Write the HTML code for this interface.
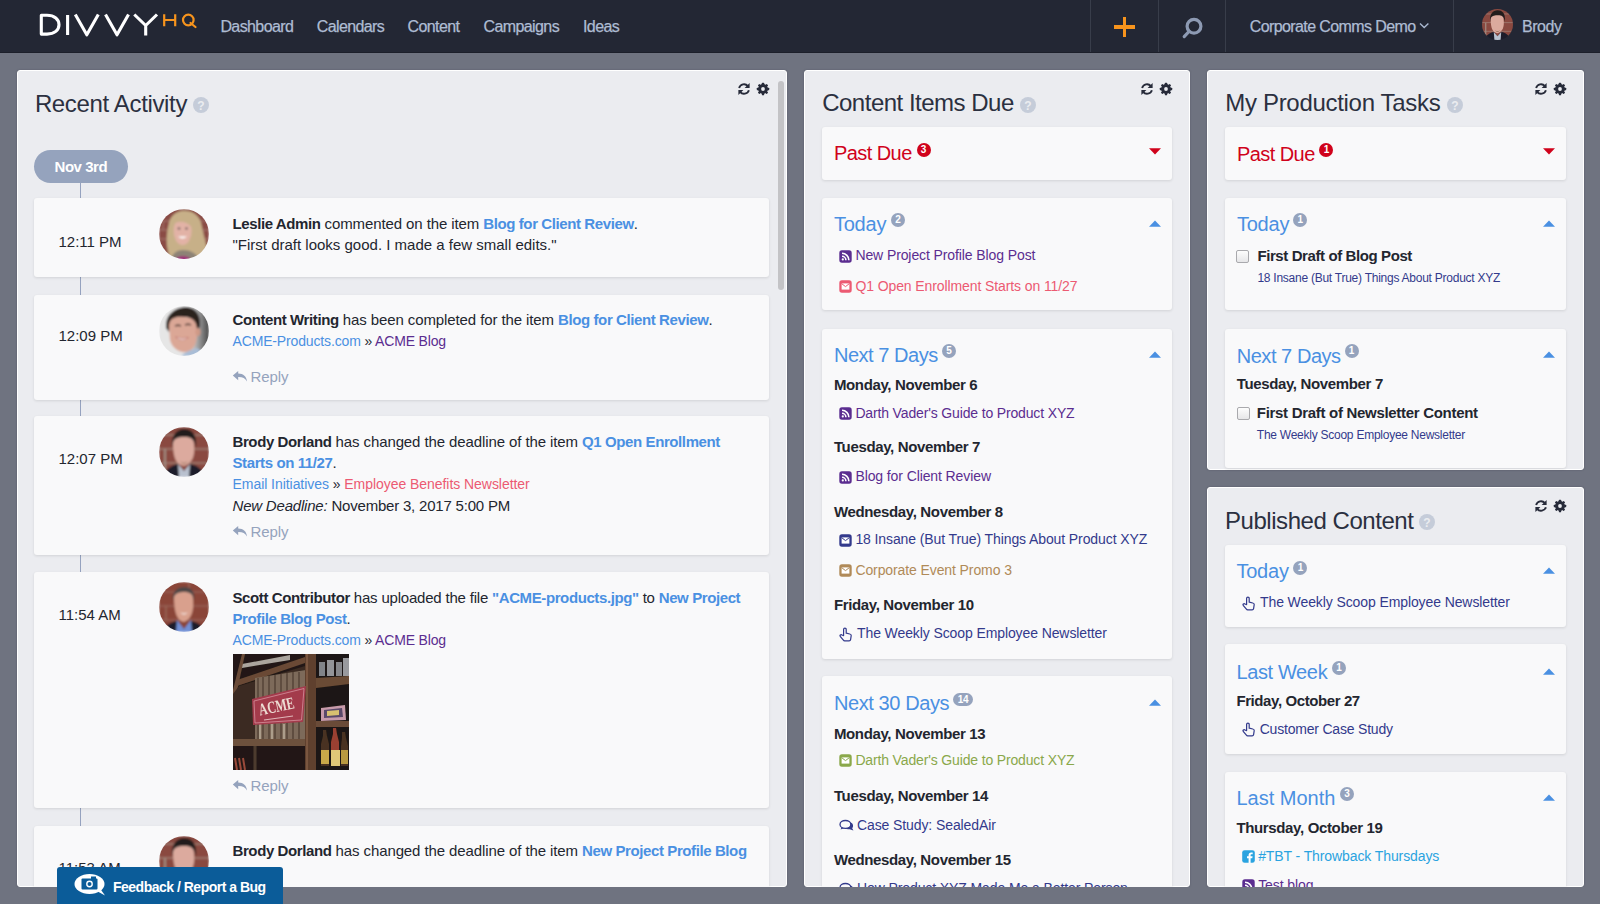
<!DOCTYPE html>
<html><head><meta charset="utf-8"><title>DivvyHQ Dashboard</title>
<style>
html,body{margin:0;padding:0}
body{width:1600px;height:904px;overflow:hidden;position:relative;background:#6f7380;font-family:"Liberation Sans",sans-serif;}
.t{position:absolute;white-space:nowrap}
.panel{position:absolute;background:#ebecf0;border:1px solid #fff;border-radius:3px;box-sizing:border-box;overflow:hidden;box-shadow:0 0 2px rgba(40,44,56,.35)}
.card{position:absolute;background:#f9f9fa;border-radius:3px;box-shadow:0 1px 3px rgba(0,0,0,.11)}
b{font-weight:700;letter-spacing:-0.4px}
.bl{color:#4a90e2;font-weight:700;letter-spacing:-0.4px}
</style></head><body>

<div style="position:absolute;left:0px;top:0px;width:1600px;height:52px;background:#232734;border-bottom:1px solid #1c1f2a"></div>
<svg style="position:absolute;left:36px;top:8px" width="166" height="34" viewBox="0 0 166 34">
<g fill="none" stroke="#fff" stroke-width="3.1" stroke-linejoin="round">
<path d="M5.3,7.3 V26.1 H11 C18.5,26.1 23,22 23,16.7 C23,11.4 18.5,7.3 11,7.3 Z"/>
<path d="M31.6,7 V27"/>
<path d="M39.3,6.5 L50.8,26.8 L62.3,6.5"/>
<path d="M69.5,6.5 L81,26.8 L92.5,6.5"/>
<path d="M98.3,6.5 L109.7,17.5 L121,6.5 M109.7,17.5 V27.5"/>
</g>
<g fill="none" stroke="#f7941d" stroke-width="2.2">
<path d="M128.2,6.2 V18.2 M139.2,6.2 V18.2 M128.2,12 H139.2"/>
<circle cx="152.3" cy="12" r="5.3"/>
<path d="M154.5,15 L159.5,19" stroke-linecap="round"/>
</g></svg>
<div class="t" style="left:220.4px;top:17.26px;font-size:16px;line-height:19px;color:#aebcd3;letter-spacing:-0.6px;-webkit-text-stroke:0.25px #aebcd3;">Dashboard</div>
<div class="t" style="left:316.7px;top:17.26px;font-size:16px;line-height:19px;color:#aebcd3;letter-spacing:-0.6px;-webkit-text-stroke:0.25px #aebcd3;">Calendars</div>
<div class="t" style="left:407.5px;top:17.26px;font-size:16px;line-height:19px;color:#aebcd3;letter-spacing:-0.6px;-webkit-text-stroke:0.25px #aebcd3;">Content</div>
<div class="t" style="left:483.5px;top:17.26px;font-size:16px;line-height:19px;color:#aebcd3;letter-spacing:-0.6px;-webkit-text-stroke:0.25px #aebcd3;">Campaigns</div>
<div class="t" style="left:583.0px;top:17.26px;font-size:16px;line-height:19px;color:#aebcd3;letter-spacing:-0.6px;-webkit-text-stroke:0.25px #aebcd3;">Ideas</div>
<div style="position:absolute;left:1090px;top:0px;width:1px;height:52px;background:#383d4a"></div>
<div style="position:absolute;left:1158px;top:0px;width:1px;height:52px;background:#383d4a"></div>
<div style="position:absolute;left:1225px;top:0px;width:1px;height:52px;background:#383d4a"></div>
<div style="position:absolute;left:1453px;top:0px;width:1px;height:52px;background:#383d4a"></div>
<div style="position:absolute;left:1114px;top:25.2px;width:21px;height:3.6px;background:#f7941d"></div>
<div style="position:absolute;left:1122.7px;top:17px;width:3.6px;height:20px;background:#f7941d"></div>
<svg style="position:absolute;left:1180px;top:14px" width="26" height="26" viewBox="0 0 26 26"><g fill="none" stroke="#8d9ab3" stroke-width="3.2" stroke-linecap="round"><circle cx="14" cy="12.3" r="6.9"/><path d="M9,17.5 L4.2,22.6"/></g></svg>
<div class="t" style="left:1249.7px;top:17.26px;font-size:16px;line-height:19px;color:#aebcd3;letter-spacing:-0.6px;-webkit-text-stroke:0.25px #aebcd3;">Corporate Comms Demo</div>
<svg style="position:absolute;left:1419px;top:22px" width="11" height="8" viewBox="0 0 11 8"><path d="M1,1.5 L5.2,5.5 L9.4,1.5" fill="none" stroke="#a9b8d0" stroke-width="1.4"/></svg>
<div class="t" style="left:1521.9px;top:17.26px;font-size:16px;line-height:19px;color:#aebcd3;letter-spacing:-0.4px;-webkit-text-stroke:0.25px #aebcd3;">Brody</div>
<div class="panel" style="left:17px;top:70px;width:770px;height:817px"></div>
<div class="panel" style="left:804px;top:70px;width:386px;height:817px"></div>
<div class="panel" style="left:1207px;top:70px;width:377px;height:400px"></div>
<div class="panel" style="left:1207px;top:487px;width:377px;height:400px"></div>
<div class="t" style="left:34.9px;top:89.38px;font-size:24px;line-height:29px;color:#2b3040;letter-spacing:-0.35px;">Recent Activity</div>
<svg style="position:absolute;left:193px;top:97px" width="16" height="16" viewBox="0 0 16 16"><circle cx="8.0" cy="8.0" r="8.0" fill="#c5ccd9"/><text x="8.0" y="12.6" text-anchor="middle" font-family="Liberation Sans" font-weight="700" font-size="12" fill="#ebecf0">?</text></svg>
<svg style="position:absolute;left:737px;top:82px" width="14" height="14" viewBox="0 0 14 14"><g fill="none" stroke="#272b3a" stroke-width="1.9">
<path d="M2.1,5.9 A5.1,5.1 0 0 1 10.9,4.1"/>
<path d="M11.9,8.2 A5.1,5.1 0 0 1 3.1,9.9"/></g>
<path d="M12.6,0.9 V5.9 H7.6 Z" fill="#272b3a"/>
<path d="M1.4,13.1 V8.1 H6.4 Z" fill="#272b3a"/></svg>
<svg style="position:absolute;left:756px;top:82px" width="14" height="14" viewBox="0 0 14 14"><g fill="#272b3a"><circle cx="7" cy="7" r="4.9"/><rect x="5.85" y="0.8" width="2.3" height="12.4" rx="0.5" transform="rotate(0 7 7)"/><rect x="5.85" y="0.8" width="2.3" height="12.4" rx="0.5" transform="rotate(45 7 7)"/><rect x="5.85" y="0.8" width="2.3" height="12.4" rx="0.5" transform="rotate(90 7 7)"/><rect x="5.85" y="0.8" width="2.3" height="12.4" rx="0.5" transform="rotate(135 7 7)"/></g><circle cx="7" cy="7" r="1.9" fill="#ebecf0"/></svg>
<div style="position:absolute;left:778px;top:81px;width:6px;height:209px;background:#c3c3c6;border-radius:3px"></div>
<div style="position:absolute;left:34px;top:150px;width:94px;height:33px;background:#95a3bd;border-radius:17px"></div>
<div class="t" style="left:54.5px;top:157.80px;font-size:15px;line-height:18px;color:#fff;font-weight:700;letter-spacing:-0.45px;">Nov 3rd</div>
<div style="position:absolute;left:80.2px;top:183px;width:1.3px;height:704px;background:#95a2bf"></div>
<div class="card" style="left:34px;top:198px;width:735px;height:79px"></div>
<div class="card" style="left:34px;top:295px;width:735px;height:105px"></div>
<div class="card" style="left:34px;top:416px;width:735px;height:139px"></div>
<div class="card" style="left:34px;top:572px;width:735px;height:236px"></div>
<div class="card" style="left:34px;top:826px;width:735px;height:90px"></div>
<div class="t" style="left:58.5px;top:232.90px;font-size:15px;line-height:18px;color:#23262f;">12:11 PM</div>
<svg style="position:absolute;left:158.5px;top:209px" width="50" height="50" viewBox="0 0 50 50"><defs><filter id="blleslie209" x="-10%" y="-10%" width="120%" height="120%"><feGaussianBlur stdDeviation="0.85"/></filter><clipPath id="cpleslie209"><circle cx="25" cy="25" r="25"/></clipPath></defs><defs><linearGradient id="gr" x1="0" x2="1"><stop offset="0" stop-color="#e6e6e6"/><stop offset="1" stop-color="#4a4a4a"/></linearGradient></defs><g clip-path="url(#cpleslie209)"><g filter="url(#blleslie209)"><rect width="50" height="50" fill="#8a4c44"/>
<path d="M0,12 H50 M0,21 H50 M0,30 H50" stroke="#a77d74" stroke-width="1"/>
<path d="M4,12 V21 M44,21 V30" stroke="#a77d74" stroke-width="1"/>
<path d="M10,46 C6,34 8,22 10,14 C12,5 20,1 27,2 C36,2 42,9 43,18 C44,26 48,34 48,44 L40,52 H12 Z" fill="#c7b088"/>
<path d="M12,50 C14,44 18,41 24,41 C31,41 37,44 40,50 Z" fill="#8d8376"/>
<ellipse cx="23.6" cy="22" rx="9" ry="14" fill="#e2b2a6"/>
<path d="M16,12 C20,7 30,6 34,12 C36,16 36,20 35,24 C33,16 26,10 16,14 Z" fill="#c7b088"/>
<ellipse cx="20" cy="19.5" rx="1.4" ry="0.9" fill="#5a4a50"/><ellipse cx="27.5" cy="19.5" rx="1.4" ry="0.9" fill="#5a4a50"/>
<path d="M19,27.5 Q23.5,31.5 28,27.5 Z" fill="#fff"/>
<path d="M17,49 Q24,45 31,49 L31,52 H17 Z" fill="#9e2f78"/></g></g></svg>
<div class="t" style="left:232.5px;top:214.60px;font-size:15px;line-height:18px;color:#23262f;letter-spacing:-0.1px;"><b style="color:#23262f">Leslie Admin</b> commented on the item <span class="bl">Blog for Client Review</span>.</div>
<div class="t" style="left:232.5px;top:236.10px;font-size:15px;line-height:18px;color:#23262f;letter-spacing:0px;">"First draft looks good. I made a few small edits."</div>
<div class="t" style="left:58.5px;top:327.40px;font-size:15px;line-height:18px;color:#23262f;">12:09 PM</div>
<svg style="position:absolute;left:158.5px;top:305.5px" width="50" height="50" viewBox="0 0 50 50"><defs><filter id="blcontent305" x="-10%" y="-10%" width="120%" height="120%"><feGaussianBlur stdDeviation="0.85"/></filter><clipPath id="cpcontent305"><circle cx="25" cy="25" r="25"/></clipPath></defs><defs><linearGradient id="gr" x1="0" x2="1"><stop offset="0" stop-color="#e6e6e6"/><stop offset="1" stop-color="#4a4a4a"/></linearGradient></defs><g clip-path="url(#cpcontent305)"><g filter="url(#blcontent305)"><rect width="50" height="50" fill="#e6e6e6"/>
<rect x="30" width="20" height="50" fill="url(#gr)"/>
<path d="M7,22 C6,10 14,2 26,1 C36,1 42,8 41,20 L38,26 C37,16 33,11 25,11 C17,11 11,15 10,26 Z" fill="#2a211f"/>
<path d="M10,20 C10,12 17,10 25,11 C34,11 38,16 38,24 C39,34 36,44 28,46 C20,47 13,42 11,34 Z" fill="#dba796"/>
<ellipse cx="39" cy="26" rx="2.5" ry="4" fill="#cf9986"/>
<path d="M16,20 Q19,18.5 22,20" stroke="#3a2a26" stroke-width="1.3" fill="none"/><path d="M26,19 Q29,17.5 32,19" stroke="#3a2a26" stroke-width="1.3" fill="none"/>
<path d="M16.5,31 Q23,37 29.5,31.5 Q23,33.5 16.5,31 Z" fill="#fff" stroke="#b55e58" stroke-width="0.6"/>
<path d="M22,50 C26,46 32,44 38,42 L50,50 Z" fill="#a9bdd6"/></g></g></svg>
<div class="t" style="left:232.5px;top:310.80px;font-size:15px;line-height:18px;color:#23262f;letter-spacing:-0.1px;"><b style="color:#23262f">Content Writing</b> has been completed for the item <span class="bl">Blog for Client Review</span>.</div>
<div class="t" style="left:232.5px;top:333.05px;font-size:14px;line-height:17px;color:#23262f;letter-spacing:-0.15px;"><span style="color:#4a90e2">ACME-Products.com</span> » <span style="color:#5b2d90">ACME Blog</span></div>
<svg style="position:absolute;left:232px;top:369.9px" width="16" height="13" viewBox="0 0 16 13"><path d="M6.2,1 L0.8,5.6 L6.2,10.2 V7.1 C10.5,7 13.3,8.3 15,11.6 C14.6,6.6 11.5,3.6 6.2,3.6 Z" fill="#95a3bd"/></svg>
<div class="t" style="left:250.5px;top:367.70px;font-size:15px;line-height:18px;color:#95a3bd;letter-spacing:-0.1px;">Reply</div>
<div class="t" style="left:58.5px;top:450.30px;font-size:15px;line-height:18px;color:#23262f;">12:07 PM</div>
<svg style="position:absolute;left:158.5px;top:426.5px" width="50" height="50" viewBox="0 0 50 50"><defs><filter id="blbrody426" x="-10%" y="-10%" width="120%" height="120%"><feGaussianBlur stdDeviation="0.85"/></filter><clipPath id="cpbrody426"><circle cx="25" cy="25" r="25"/></clipPath></defs><defs><linearGradient id="gr" x1="0" x2="1"><stop offset="0" stop-color="#e6e6e6"/><stop offset="1" stop-color="#4a4a4a"/></linearGradient></defs><g clip-path="url(#cpbrody426)"><g filter="url(#blbrody426)"><rect width="50" height="50" fill="#8a4a40"/>
<path d="M0,22 H50 M0,8 H50 M0,36 H50" stroke="#9f7d72" stroke-width="1.3"/>
<path d="M6,22 V50" stroke="#a08a80" stroke-width="2"/>
<path d="M13,20 C12,8 18,2 25,2 C33,2 38,7 37,20 L35,14 C31,11 20,11 15,14 Z" fill="#221b1b"/>
<path d="M14,16 C15,10 22,10 26,10 C32,10 35,12 35,18 C36,28 34,36 25,39 C17,38 14,30 14,16 Z" fill="#dcaa9e"/>
<path d="M21,34 Q25,38 29,34 Q25,40 21,34 Z" fill="#8a6a50"/>
<path d="M4,50 C6,42 13,38 19,37 L25,44 L31,37 C38,38 44,42 46,50 Z" fill="#1b1e2b"/>
<path d="M19,37 L25,44 L31,37 L30,50 H20 Z" fill="#b9c1cf"/></g></g></svg>
<div class="t" style="left:232.5px;top:433.40px;font-size:15px;line-height:18px;color:#23262f;letter-spacing:-0.1px;"><b style="color:#23262f">Brody Dorland</b> has changed the deadline of the item <span class="bl">Q1 Open Enrollment</span></div>
<div class="t" style="left:232.5px;top:454.40px;font-size:15px;line-height:18px;color:#23262f;"><span class="bl">Starts on 11/27</span>.</div>
<div class="t" style="left:232.5px;top:476.35px;font-size:14px;line-height:17px;color:#23262f;letter-spacing:-0.05px;"><span style="color:#4a90e2">Email Initiatives</span> » <span style="color:#ec5a72">Employee Benefits Newsletter</span></div>
<div class="t" style="left:232.5px;top:496.50px;font-size:15px;line-height:18px;color:#23262f;letter-spacing:-0.2px;"><i>New Deadline:</i> November 3, 2017 5:00 PM</div>
<svg style="position:absolute;left:232px;top:525.3px" width="16" height="13" viewBox="0 0 16 13"><path d="M6.2,1 L0.8,5.6 L6.2,10.2 V7.1 C10.5,7 13.3,8.3 15,11.6 C14.6,6.6 11.5,3.6 6.2,3.6 Z" fill="#95a3bd"/></svg>
<div class="t" style="left:250.5px;top:523.10px;font-size:15px;line-height:18px;color:#95a3bd;letter-spacing:-0.1px;">Reply</div>
<div class="t" style="left:58.5px;top:605.60px;font-size:15px;line-height:18px;color:#23262f;">11:54 AM</div>
<svg style="position:absolute;left:158.5px;top:582px" width="50" height="50" viewBox="0 0 50 50"><defs><filter id="blscott582" x="-10%" y="-10%" width="120%" height="120%"><feGaussianBlur stdDeviation="0.85"/></filter><clipPath id="cpscott582"><circle cx="25" cy="25" r="25"/></clipPath></defs><defs><linearGradient id="gr" x1="0" x2="1"><stop offset="0" stop-color="#e6e6e6"/><stop offset="1" stop-color="#4a4a4a"/></linearGradient></defs><g clip-path="url(#cpscott582)"><g filter="url(#blscott582)"><rect width="50" height="50" fill="#8a4538"/>
<path d="M0,10 H50 M0,24 H50 M0,38 H50" stroke="#9c6e62" stroke-width="1"/>
<path d="M7,24 V38 M30,0 V10" stroke="#9c6e62" stroke-width="1.2"/>
<path d="M14,18 C13,9 19,5 25,5 C32,5 36,9 35,18 L33,14 C29,11 20,11 16,14 Z" fill="#4d4747"/>
<path d="M15,15 C16,11 21,10 25,10 C31,10 34,12 34,17 C35,28 33,37 25,40 C18,39 15,30 15,15 Z" fill="#d9a08d"/>
<path d="M21,30 Q25,33 29,30 Q25,35 21,30 Z" fill="#fff"/>
<path d="M3,50 C5,44 12,40 18,39 L25,47 L32,39 C38,40 45,44 47,50 Z" fill="#1d1d29"/>
<path d="M18,38 L25,47 L32,38 L33,50 H17 Z" fill="#7190d6"/></g></g></svg>
<div class="t" style="left:232.5px;top:588.70px;font-size:15px;line-height:18px;color:#23262f;letter-spacing:-0.2px;"><b style="color:#23262f">Scott Contributor</b> has uploaded the file <span class="bl">"ACME-products.jpg"</span> to <span class="bl">New Project</span></div>
<div class="t" style="left:232.5px;top:609.90px;font-size:15px;line-height:18px;color:#23262f;"><span class="bl">Profile Blog Post</span>.</div>
<div class="t" style="left:232.5px;top:631.95px;font-size:14px;line-height:17px;color:#23262f;letter-spacing:-0.15px;"><span style="color:#4a90e2">ACME-Products.com</span> » <span style="color:#5b2d90">ACME Blog</span></div>
<svg style="position:absolute;left:232.8px;top:654px" width="116" height="116" viewBox="0 0 116 116"><defs><filter id="imgbl"><feGaussianBlur stdDeviation="0.5"/></filter></defs><g filter="url(#imgbl)">
<rect width="116" height="116" fill="#2b201b"/>
<path d="M0,0 H72 V30 L8,38 L0,42 Z" fill="#221915"/>
<path d="M9,10 L57,1 L57,6 L9,14 Z" fill="#d9d4cc" opacity=".75"/>
<path d="M4,26 L72,3 L72,9 L4,32 Z" fill="#6a4a36"/>
<path d="M9,0 L12,0 L3,42 L0,42 L0,36 Z" fill="#6b4b37"/>
<path d="M6,32 L72,12 V88 H0 V40 Z" fill="#3a2a22"/>
<path d="M22,24 L73,16 V86 H22 Z" fill="#7d6b5a"/>
<path d="M25,24 v62 M30,23 v63 M36,22 v64 M42,21 v65 M48,20 v66 M54,19 v67 M60,18 v68 M66,18 v68" stroke="#4b3b30" stroke-width="1.2"/>
<path d="M27,70 v16 M39,70 v16 M51,70 v16" stroke="#b8ab98" stroke-width="1.6"/>
<path d="M0,85 H73 V92 H0 Z" fill="#6d513e"/>
<path d="M0,92 H73 V116 H0 Z" fill="#231915"/>
<path d="M22,92 V116" stroke="#4e3a2e" stroke-width="3"/>
<path d="M2,104 L4,116 M6,104 L8,116 M10,104 L12,116" stroke="#9a4a3a" stroke-width="2"/>
<rect x="72" y="0" width="11" height="116" fill="#5e3f2d"/>
<rect x="73" y="0" width="2" height="116" fill="#7a5640"/>
<rect x="83" y="0" width="33" height="116" fill="#1f1813"/>
<rect x="86" y="8" width="6" height="14" fill="#9aa0a8" opacity=".8"/><rect x="94" y="6" width="7" height="16" fill="#b0b4ba" opacity=".8"/><rect x="103" y="8" width="6" height="14" fill="#a0a4aa" opacity=".8"/><rect x="110" y="4" width="6" height="18" fill="#b8bcc2" opacity=".8"/>
<path d="M83,24 L116,22 V30 L83,34 Z" fill="#6b4b36"/>
<path d="M88,54 L112,51 L113,66 L88,67 Z" fill="#c79aaa"/>
<path d="M91,56 L109,54 L110,63 L91,64 Z" fill="#5a4a6a"/><path d="M94,57 L106,56 L106,61 L94,62 Z" fill="#d8c070"/>
<path d="M83,67 H116 V73 H83 Z" fill="#6a4c38"/>
<path d="M90,76 h3 l1,6 l2,8 v22 h-8 v-22 l2,-8 Z" fill="#4a3020"/><path d="M88,96 h8 v14 h-8 Z" fill="#c9a84a"/>
<path d="M100,74 h3 l1,6 l2,8 v24 h-8 v-24 l2,-8 Z" fill="#9a4030"/><path d="M98,96 h9 v16 h-9 Z" fill="#e0c878"/>
<path d="M109,78 h3 l1,6 l2,8 v20 h-7 v-20 l1,-8 Z" fill="#4a3020"/><path d="M108,96 h7 v14 h-7 Z" fill="#b99a40"/>
<path d="M19,45 L73,32 L70,68 L20,71 Z" fill="#a33a4c"/>
<path d="M21,47 L71,34.5 L68.5,66 L22,69 Z" fill="none" stroke="#d5909c" stroke-width="0.8"/>
<text x="25" y="58" font-family="Liberation Serif" font-weight="700" font-size="17" fill="#eddcd2" transform="rotate(-12 43 50)" textLength="36" lengthAdjust="spacingAndGlyphs">ACME</text>
<path d="M31,66 L60,62" stroke="#e0b8b8" stroke-width="1.2"/>
</g></svg>
<svg style="position:absolute;left:232px;top:779.3px" width="16" height="13" viewBox="0 0 16 13"><path d="M6.2,1 L0.8,5.6 L6.2,10.2 V7.1 C10.5,7 13.3,8.3 15,11.6 C14.6,6.6 11.5,3.6 6.2,3.6 Z" fill="#95a3bd"/></svg>
<div class="t" style="left:250.5px;top:777.10px;font-size:15px;line-height:18px;color:#95a3bd;letter-spacing:-0.1px;">Reply</div>
<div class="t" style="left:58.5px;top:858.80px;font-size:15px;line-height:18px;color:#23262f;">11:53 AM</div>
<svg style="position:absolute;left:158.5px;top:836px" width="50" height="50" viewBox="0 0 50 50"><defs><filter id="blbrody836" x="-10%" y="-10%" width="120%" height="120%"><feGaussianBlur stdDeviation="0.85"/></filter><clipPath id="cpbrody836"><circle cx="25" cy="25" r="25"/></clipPath></defs><defs><linearGradient id="gr" x1="0" x2="1"><stop offset="0" stop-color="#e6e6e6"/><stop offset="1" stop-color="#4a4a4a"/></linearGradient></defs><g clip-path="url(#cpbrody836)"><g filter="url(#blbrody836)"><rect width="50" height="50" fill="#8a4a40"/>
<path d="M0,22 H50 M0,8 H50 M0,36 H50" stroke="#9f7d72" stroke-width="1.3"/>
<path d="M6,22 V50" stroke="#a08a80" stroke-width="2"/>
<path d="M13,20 C12,8 18,2 25,2 C33,2 38,7 37,20 L35,14 C31,11 20,11 15,14 Z" fill="#221b1b"/>
<path d="M14,16 C15,10 22,10 26,10 C32,10 35,12 35,18 C36,28 34,36 25,39 C17,38 14,30 14,16 Z" fill="#dcaa9e"/>
<path d="M21,34 Q25,38 29,34 Q25,40 21,34 Z" fill="#8a6a50"/>
<path d="M4,50 C6,42 13,38 19,37 L25,44 L31,37 C38,38 44,42 46,50 Z" fill="#1b1e2b"/>
<path d="M19,37 L25,44 L31,37 L30,50 H20 Z" fill="#b9c1cf"/></g></g></svg>
<div class="t" style="left:232.5px;top:842.30px;font-size:15px;line-height:18px;color:#23262f;letter-spacing:-0.1px;"><b style="color:#23262f">Brody Dorland</b> has changed the deadline of the item <span class="bl">New Project Profile Blog</span></div>
<div class="t" style="left:232.5px;top:863.80px;font-size:15px;line-height:18px;color:#4a90e2;"><span style="color:#4a90e2">Post</span></div>
<div style="position:absolute;left:17px;top:887px;width:770px;height:17px;background:#6f7380"></div>
<div class="t" style="left:822.2px;top:88.48px;font-size:24px;line-height:29px;color:#2b3040;letter-spacing:-0.5px;">Content Items Due</div>
<svg style="position:absolute;left:1019.5px;top:97px" width="16" height="16" viewBox="0 0 16 16"><circle cx="8.0" cy="8.0" r="8.0" fill="#c5ccd9"/><text x="8.0" y="12.6" text-anchor="middle" font-family="Liberation Sans" font-weight="700" font-size="12" fill="#ebecf0">?</text></svg>
<svg style="position:absolute;left:1140px;top:82px" width="14" height="14" viewBox="0 0 14 14"><g fill="none" stroke="#272b3a" stroke-width="1.9">
<path d="M2.1,5.9 A5.1,5.1 0 0 1 10.9,4.1"/>
<path d="M11.9,8.2 A5.1,5.1 0 0 1 3.1,9.9"/></g>
<path d="M12.6,0.9 V5.9 H7.6 Z" fill="#272b3a"/>
<path d="M1.4,13.1 V8.1 H6.4 Z" fill="#272b3a"/></svg>
<svg style="position:absolute;left:1159px;top:82px" width="14" height="14" viewBox="0 0 14 14"><g fill="#272b3a"><circle cx="7" cy="7" r="4.9"/><rect x="5.85" y="0.8" width="2.3" height="12.4" rx="0.5" transform="rotate(0 7 7)"/><rect x="5.85" y="0.8" width="2.3" height="12.4" rx="0.5" transform="rotate(45 7 7)"/><rect x="5.85" y="0.8" width="2.3" height="12.4" rx="0.5" transform="rotate(90 7 7)"/><rect x="5.85" y="0.8" width="2.3" height="12.4" rx="0.5" transform="rotate(135 7 7)"/></g><circle cx="7" cy="7" r="1.9" fill="#ebecf0"/></svg>
<div class="card" style="left:822px;top:127px;width:350px;height:53px"></div>
<div class="t" style="left:833.9px;top:141.47px;font-size:20px;line-height:24px;color:#d0021b;letter-spacing:-0.55px;">Past Due</div>
<div style="position:absolute;left:916.5px;top:142.5px;width:14px;height:14px;border-radius:7.0px;background:#d0021b;color:#fff;font-size:10px;font-weight:700;line-height:14px;text-align:center;letter-spacing:-0.3px">3</div>
<svg style="position:absolute;left:1149px;top:148.2px" width="12" height="7" viewBox="0 0 12 7"><path d="M0,0.2 H12 L6,6.6 Z" fill="#d0021b"/></svg>
<div class="card" style="left:822px;top:198px;width:350px;height:112px"></div>
<div class="t" style="left:833.9px;top:211.57px;font-size:20px;line-height:24px;color:#4a90e2;letter-spacing:-0.2px;">Today</div>
<div style="position:absolute;left:890.8px;top:213.2px;width:14px;height:14px;border-radius:7.0px;background:#95a3bd;color:#fff;font-size:10px;font-weight:700;line-height:14px;text-align:center;letter-spacing:-0.3px">2</div>
<svg style="position:absolute;left:1149px;top:219.7px" width="12" height="7" viewBox="0 0 12 7"><path d="M0,6.8 H12 L6,0.4 Z" fill="#4a90e2"/></svg>
<svg style="position:absolute;left:839px;top:249.5px" width="13" height="13" viewBox="0 0 13 13"><g><rect x="0.3" y="0.3" width="12.4" height="12.4" rx="2.6" fill="#5b2d90"/><g fill="none" stroke="#fff" stroke-width="1.6"><path d="M3,6.3 A3.9,3.9 0 0 1 6.9,10.2"/><path d="M3,3.3 A6.9,6.9 0 0 1 9.9,10.2"/></g><circle cx="3.8" cy="9.4" r="1.1" fill="#fff"/></g></svg>
<div class="t" style="left:855.4px;top:247.45px;font-size:14px;line-height:17px;color:#5b2d90;letter-spacing:-0.1px;">New Project Profile Blog Post</div>
<svg style="position:absolute;left:839px;top:280.2px" width="13" height="13" viewBox="0 0 13 13"><g><rect x="0.3" y="0.3" width="12.4" height="12.4" rx="2.6" fill="#ec5a72"/><rect x="2.6" y="3.4" width="7.8" height="6.2" fill="#fff"/><path d="M2.6,3.6 L6.5,6.6 L10.4,3.6" fill="none" stroke="#ec5a72" stroke-width="1"/></g></svg>
<div class="t" style="left:855.4px;top:278.25px;font-size:14px;line-height:17px;color:#ec5a72;letter-spacing:-0.1px;">Q1 Open Enrollment Starts on 11/27</div>
<div class="card" style="left:822px;top:328.5px;width:350px;height:330px"></div>
<div class="t" style="left:833.9px;top:342.87px;font-size:20px;line-height:24px;color:#4a90e2;letter-spacing:-0.45px;">Next 7 Days</div>
<div style="position:absolute;left:941.8px;top:343.8px;width:14px;height:14px;border-radius:7.0px;background:#95a3bd;color:#fff;font-size:10px;font-weight:700;line-height:14px;text-align:center;letter-spacing:-0.3px">5</div>
<svg style="position:absolute;left:1149px;top:351px" width="12" height="7" viewBox="0 0 12 7"><path d="M0,6.8 H12 L6,0.4 Z" fill="#4a90e2"/></svg>
<div class="t" style="left:833.9px;top:375.50px;font-size:15px;line-height:18px;color:#23262f;font-weight:700;letter-spacing:-0.35px;">Monday, November 6</div>
<svg style="position:absolute;left:839px;top:407px" width="13" height="13" viewBox="0 0 13 13"><g><rect x="0.3" y="0.3" width="12.4" height="12.4" rx="2.6" fill="#5b2d90"/><g fill="none" stroke="#fff" stroke-width="1.6"><path d="M3,6.3 A3.9,3.9 0 0 1 6.9,10.2"/><path d="M3,3.3 A6.9,6.9 0 0 1 9.9,10.2"/></g><circle cx="3.8" cy="9.4" r="1.1" fill="#fff"/></g></svg>
<div class="t" style="left:855.4px;top:404.65px;font-size:14px;line-height:17px;color:#5b2d90;letter-spacing:-0.15px;">Darth Vader's Guide to Product XYZ</div>
<div class="t" style="left:833.9px;top:438.20px;font-size:15px;line-height:18px;color:#23262f;font-weight:700;letter-spacing:-0.35px;">Tuesday, November 7</div>
<svg style="position:absolute;left:839px;top:470.5px" width="13" height="13" viewBox="0 0 13 13"><g><rect x="0.3" y="0.3" width="12.4" height="12.4" rx="2.6" fill="#5b2d90"/><g fill="none" stroke="#fff" stroke-width="1.6"><path d="M3,6.3 A3.9,3.9 0 0 1 6.9,10.2"/><path d="M3,3.3 A6.9,6.9 0 0 1 9.9,10.2"/></g><circle cx="3.8" cy="9.4" r="1.1" fill="#fff"/></g></svg>
<div class="t" style="left:855.4px;top:467.95px;font-size:14px;line-height:17px;color:#5b2d90;letter-spacing:-0.1px;">Blog for Client Review</div>
<div class="t" style="left:833.9px;top:502.70px;font-size:15px;line-height:18px;color:#23262f;font-weight:700;letter-spacing:-0.35px;">Wednesday, November 8</div>
<svg style="position:absolute;left:839px;top:533.5px" width="13" height="13" viewBox="0 0 13 13"><g><rect x="0.3" y="0.3" width="12.4" height="12.4" rx="2.6" fill="#333a8c"/><rect x="2.6" y="3.4" width="7.8" height="6.2" fill="#fff"/><path d="M2.6,3.6 L6.5,6.6 L10.4,3.6" fill="none" stroke="#333a8c" stroke-width="1"/></g></svg>
<div class="t" style="left:855.4px;top:531.45px;font-size:14px;line-height:17px;color:#333a8c;letter-spacing:-0.1px;">18 Insane (But True) Things About Product XYZ</div>
<svg style="position:absolute;left:839px;top:564px" width="13" height="13" viewBox="0 0 13 13"><g><rect x="0.3" y="0.3" width="12.4" height="12.4" rx="2.6" fill="#b08a58"/><rect x="2.6" y="3.4" width="7.8" height="6.2" fill="#fff"/><path d="M2.6,3.6 L6.5,6.6 L10.4,3.6" fill="none" stroke="#b08a58" stroke-width="1"/></g></svg>
<div class="t" style="left:855.4px;top:562.25px;font-size:14px;line-height:17px;color:#b08a58;letter-spacing:-0.1px;">Corporate Event Promo 3</div>
<div class="t" style="left:833.9px;top:595.90px;font-size:15px;line-height:18px;color:#23262f;font-weight:700;letter-spacing:-0.35px;">Friday, November 10</div>
<svg style="position:absolute;left:838.5px;top:626.5px" width="14" height="15" viewBox="0 0 14 15"><path d="M4.6,8.6 V2.4 A1.3,1.3 0 0 1 7.2,2.4 V6.2 L10.8,7 A1.6,1.6 0 0 1 12.2,8.7 L11.6,12.6 A1.5,1.5 0 0 1 10.1,13.8 H5.6 A1.5,1.5 0 0 1 4.4,13.2 L1.4,9.6 A1.1,1.1 0 0 1 3,8 Z" fill="none" stroke="#333a8c" stroke-width="1.2" stroke-linejoin="round"/></svg>
<div class="t" style="left:857.0px;top:625.05px;font-size:14px;line-height:17px;color:#333a8c;letter-spacing:-0.1px;">The Weekly Scoop Employee Newsletter</div>
<div class="card" style="left:822px;top:676px;width:350px;height:230px"></div>
<div class="t" style="left:833.9px;top:691.17px;font-size:20px;line-height:24px;color:#4a90e2;letter-spacing:-0.4px;">Next 30 Days</div>
<div style="position:absolute;left:953px;top:692.5px;width:20px;height:13px;border-radius:6.5px;background:#95a3bd;color:#fff;font-size:10px;font-weight:700;line-height:13px;text-align:center;letter-spacing:-0.3px">14</div>
<svg style="position:absolute;left:1149px;top:699px" width="12" height="7" viewBox="0 0 12 7"><path d="M0,6.8 H12 L6,0.4 Z" fill="#4a90e2"/></svg>
<div class="t" style="left:833.9px;top:724.50px;font-size:15px;line-height:18px;color:#23262f;font-weight:700;letter-spacing:-0.35px;">Monday, November 13</div>
<svg style="position:absolute;left:839px;top:754.2px" width="13" height="13" viewBox="0 0 13 13"><g><rect x="0.3" y="0.3" width="12.4" height="12.4" rx="2.6" fill="#8aa84a"/><rect x="2.6" y="3.4" width="7.8" height="6.2" fill="#fff"/><path d="M2.6,3.6 L6.5,6.6 L10.4,3.6" fill="none" stroke="#8aa84a" stroke-width="1"/></g></svg>
<div class="t" style="left:855.4px;top:752.25px;font-size:14px;line-height:17px;color:#8aa84a;letter-spacing:-0.15px;">Darth Vader's Guide to Product XYZ</div>
<div class="t" style="left:833.9px;top:787.30px;font-size:15px;line-height:18px;color:#23262f;font-weight:700;letter-spacing:-0.35px;">Tuesday, November 14</div>
<svg style="position:absolute;left:838.5px;top:818.5px" width="16" height="13" viewBox="0 0 16 13"><ellipse cx="6.4" cy="5.4" rx="5.4" ry="3.9" fill="none" stroke="#333a8c" stroke-width="1.3"/><path d="M2.6,8.3 L1.6,10.5 L5,9.2" fill="#333a8c"/><path d="M11.8,3.4 C14.2,4.4 14.8,7.4 13.2,9.2 L14.4,11.4 L10.6,10.2 C8.8,10.6 7,10.2 5.8,9.3 C9.4,9.4 12.4,7.4 11.8,3.4 Z" fill="#333a8c"/></svg>
<div class="t" style="left:857.0px;top:817.05px;font-size:14px;line-height:17px;color:#333a8c;letter-spacing:-0.1px;">Case Study: SealedAir</div>
<div class="t" style="left:833.9px;top:850.70px;font-size:15px;line-height:18px;color:#23262f;font-weight:700;letter-spacing:-0.35px;">Wednesday, November 15</div>
<svg style="position:absolute;left:838.5px;top:882px" width="16" height="13" viewBox="0 0 16 13"><ellipse cx="6.4" cy="5.4" rx="5.4" ry="3.9" fill="none" stroke="#333a8c" stroke-width="1.3"/><path d="M2.6,8.3 L1.6,10.5 L5,9.2" fill="#333a8c"/><path d="M11.8,3.4 C14.2,4.4 14.8,7.4 13.2,9.2 L14.4,11.4 L10.6,10.2 C8.8,10.6 7,10.2 5.8,9.3 C9.4,9.4 12.4,7.4 11.8,3.4 Z" fill="#333a8c"/></svg>
<div class="t" style="left:857.0px;top:880.15px;font-size:14px;line-height:17px;color:#333a8c;letter-spacing:-0.1px;">How Product XYZ Made Me a Better Person</div>
<div style="position:absolute;left:804px;top:887px;width:386px;height:17px;background:#6f7380"></div>
<div class="t" style="left:1225.2px;top:88.48px;font-size:24px;line-height:29px;color:#2b3040;letter-spacing:-0.3px;">My Production Tasks</div>
<svg style="position:absolute;left:1447px;top:97px" width="16" height="16" viewBox="0 0 16 16"><circle cx="8.0" cy="8.0" r="8.0" fill="#c5ccd9"/><text x="8.0" y="12.6" text-anchor="middle" font-family="Liberation Sans" font-weight="700" font-size="12" fill="#ebecf0">?</text></svg>
<svg style="position:absolute;left:1534px;top:82px" width="14" height="14" viewBox="0 0 14 14"><g fill="none" stroke="#272b3a" stroke-width="1.9">
<path d="M2.1,5.9 A5.1,5.1 0 0 1 10.9,4.1"/>
<path d="M11.9,8.2 A5.1,5.1 0 0 1 3.1,9.9"/></g>
<path d="M12.6,0.9 V5.9 H7.6 Z" fill="#272b3a"/>
<path d="M1.4,13.1 V8.1 H6.4 Z" fill="#272b3a"/></svg>
<svg style="position:absolute;left:1553px;top:82px" width="14" height="14" viewBox="0 0 14 14"><g fill="#272b3a"><circle cx="7" cy="7" r="4.9"/><rect x="5.85" y="0.8" width="2.3" height="12.4" rx="0.5" transform="rotate(0 7 7)"/><rect x="5.85" y="0.8" width="2.3" height="12.4" rx="0.5" transform="rotate(45 7 7)"/><rect x="5.85" y="0.8" width="2.3" height="12.4" rx="0.5" transform="rotate(90 7 7)"/><rect x="5.85" y="0.8" width="2.3" height="12.4" rx="0.5" transform="rotate(135 7 7)"/></g><circle cx="7" cy="7" r="1.9" fill="#ebecf0"/></svg>
<div class="card" style="left:1225px;top:127px;width:341px;height:53px"></div>
<div class="t" style="left:1236.9px;top:141.57px;font-size:20px;line-height:24px;color:#d0021b;letter-spacing:-0.55px;">Past Due</div>
<div style="position:absolute;left:1319.3px;top:142.5px;width:14px;height:14px;border-radius:7.0px;background:#d0021b;color:#fff;font-size:10px;font-weight:700;line-height:14px;text-align:center;letter-spacing:-0.3px">1</div>
<svg style="position:absolute;left:1543px;top:148.2px" width="12" height="7" viewBox="0 0 12 7"><path d="M0,0.2 H12 L6,6.6 Z" fill="#d0021b"/></svg>
<div class="card" style="left:1225px;top:198px;width:341px;height:112px"></div>
<div class="t" style="left:1236.9px;top:212.47px;font-size:20px;line-height:24px;color:#4a90e2;letter-spacing:-0.2px;">Today</div>
<div style="position:absolute;left:1293.2px;top:213.2px;width:14px;height:14px;border-radius:7.0px;background:#95a3bd;color:#fff;font-size:10px;font-weight:700;line-height:14px;text-align:center;letter-spacing:-0.3px">1</div>
<svg style="position:absolute;left:1543px;top:219.7px" width="12" height="7" viewBox="0 0 12 7"><path d="M0,6.8 H12 L6,0.4 Z" fill="#4a90e2"/></svg>
<div style="position:absolute;left:1236.3px;top:250px;width:11px;height:11px;border:1px solid #a9a9ad;border-radius:2px;background:linear-gradient(#fdfdfd,#e6e6e8)"></div>
<div class="t" style="left:1257.4px;top:247.40px;font-size:15px;line-height:18px;color:#23262f;font-weight:700;letter-spacing:-0.4px;">First Draft of Blog Post</div>
<div class="t" style="left:1257.4px;top:270.94px;font-size:12px;line-height:14px;color:#333a8c;letter-spacing:-0.25px;">18 Insane (But True) Things About Product XYZ</div>
<div class="card" style="left:1225px;top:328.5px;width:341px;height:139px"></div>
<div class="t" style="left:1236.7px;top:344.07px;font-size:20px;line-height:24px;color:#4a90e2;letter-spacing:-0.45px;">Next 7 Days</div>
<div style="position:absolute;left:1344.5px;top:343.8px;width:14px;height:14px;border-radius:7.0px;background:#95a3bd;color:#fff;font-size:10px;font-weight:700;line-height:14px;text-align:center;letter-spacing:-0.3px">1</div>
<svg style="position:absolute;left:1543px;top:351px" width="12" height="7" viewBox="0 0 12 7"><path d="M0,6.8 H12 L6,0.4 Z" fill="#4a90e2"/></svg>
<div class="t" style="left:1236.7px;top:375.40px;font-size:15px;line-height:18px;color:#23262f;font-weight:700;letter-spacing:-0.35px;">Tuesday, November 7</div>
<div style="position:absolute;left:1236.5px;top:406.5px;width:11px;height:11px;border:1px solid #a9a9ad;border-radius:2px;background:linear-gradient(#fdfdfd,#e6e6e8)"></div>
<div class="t" style="left:1256.8px;top:404.20px;font-size:15px;line-height:18px;color:#23262f;font-weight:700;letter-spacing:-0.3px;">First Draft of Newsletter Content</div>
<div class="t" style="left:1256.8px;top:428.44px;font-size:12px;line-height:14px;color:#333a8c;letter-spacing:-0.25px;">The Weekly Scoop Employee Newsletter</div>
<div class="t" style="left:1225.0px;top:506.18px;font-size:24px;line-height:29px;color:#2b3040;letter-spacing:-0.45px;">Published Content</div>
<svg style="position:absolute;left:1419.3px;top:514px" width="16" height="16" viewBox="0 0 16 16"><circle cx="8.0" cy="8.0" r="8.0" fill="#c5ccd9"/><text x="8.0" y="12.6" text-anchor="middle" font-family="Liberation Sans" font-weight="700" font-size="12" fill="#ebecf0">?</text></svg>
<svg style="position:absolute;left:1534px;top:499px" width="14" height="14" viewBox="0 0 14 14"><g fill="none" stroke="#272b3a" stroke-width="1.9">
<path d="M2.1,5.9 A5.1,5.1 0 0 1 10.9,4.1"/>
<path d="M11.9,8.2 A5.1,5.1 0 0 1 3.1,9.9"/></g>
<path d="M12.6,0.9 V5.9 H7.6 Z" fill="#272b3a"/>
<path d="M1.4,13.1 V8.1 H6.4 Z" fill="#272b3a"/></svg>
<svg style="position:absolute;left:1553px;top:499px" width="14" height="14" viewBox="0 0 14 14"><g fill="#272b3a"><circle cx="7" cy="7" r="4.9"/><rect x="5.85" y="0.8" width="2.3" height="12.4" rx="0.5" transform="rotate(0 7 7)"/><rect x="5.85" y="0.8" width="2.3" height="12.4" rx="0.5" transform="rotate(45 7 7)"/><rect x="5.85" y="0.8" width="2.3" height="12.4" rx="0.5" transform="rotate(90 7 7)"/><rect x="5.85" y="0.8" width="2.3" height="12.4" rx="0.5" transform="rotate(135 7 7)"/></g><circle cx="7" cy="7" r="1.9" fill="#ebecf0"/></svg>
<div class="card" style="left:1225px;top:544.5px;width:341px;height:82.5px"></div>
<div class="t" style="left:1236.4px;top:559.37px;font-size:20px;line-height:24px;color:#4a90e2;letter-spacing:-0.2px;">Today</div>
<div style="position:absolute;left:1293.3px;top:560.5px;width:14px;height:14px;border-radius:7.0px;background:#95a3bd;color:#fff;font-size:10px;font-weight:700;line-height:14px;text-align:center;letter-spacing:-0.3px">1</div>
<svg style="position:absolute;left:1543px;top:567px" width="12" height="7" viewBox="0 0 12 7"><path d="M0,6.8 H12 L6,0.4 Z" fill="#4a90e2"/></svg>
<svg style="position:absolute;left:1241.5px;top:595.5px" width="14" height="15" viewBox="0 0 14 15"><path d="M4.6,8.6 V2.4 A1.3,1.3 0 0 1 7.2,2.4 V6.2 L10.8,7 A1.6,1.6 0 0 1 12.2,8.7 L11.6,12.6 A1.5,1.5 0 0 1 10.1,13.8 H5.6 A1.5,1.5 0 0 1 4.4,13.2 L1.4,9.6 A1.1,1.1 0 0 1 3,8 Z" fill="none" stroke="#333a8c" stroke-width="1.2" stroke-linejoin="round"/></svg>
<div class="t" style="left:1260.0px;top:594.25px;font-size:14px;line-height:17px;color:#333a8c;letter-spacing:-0.1px;">The Weekly Scoop Employee Newsletter</div>
<div class="card" style="left:1225px;top:644.3px;width:341px;height:109.5px"></div>
<div class="t" style="left:1236.4px;top:659.57px;font-size:20px;line-height:24px;color:#4a90e2;letter-spacing:-0.36px;">Last Week</div>
<div style="position:absolute;left:1331.8px;top:660.5px;width:14px;height:14px;border-radius:7.0px;background:#95a3bd;color:#fff;font-size:10px;font-weight:700;line-height:14px;text-align:center;letter-spacing:-0.3px">1</div>
<svg style="position:absolute;left:1543px;top:667.5px" width="12" height="7" viewBox="0 0 12 7"><path d="M0,6.8 H12 L6,0.4 Z" fill="#4a90e2"/></svg>
<div class="t" style="left:1236.4px;top:692.20px;font-size:15px;line-height:18px;color:#23262f;font-weight:700;letter-spacing:-0.4px;">Friday, October 27</div>
<svg style="position:absolute;left:1241.5px;top:722px" width="14" height="15" viewBox="0 0 14 15"><path d="M4.6,8.6 V2.4 A1.3,1.3 0 0 1 7.2,2.4 V6.2 L10.8,7 A1.6,1.6 0 0 1 12.2,8.7 L11.6,12.6 A1.5,1.5 0 0 1 10.1,13.8 H5.6 A1.5,1.5 0 0 1 4.4,13.2 L1.4,9.6 A1.1,1.1 0 0 1 3,8 Z" fill="none" stroke="#333a8c" stroke-width="1.2" stroke-linejoin="round"/></svg>
<div class="t" style="left:1259.7px;top:720.65px;font-size:14px;line-height:17px;color:#333a8c;letter-spacing:-0.2px;">Customer Case Study</div>
<div class="card" style="left:1225px;top:772px;width:341px;height:140px"></div>
<div class="t" style="left:1236.4px;top:786.27px;font-size:20px;line-height:24px;color:#4a90e2;letter-spacing:0px;">Last Month</div>
<div style="position:absolute;left:1340px;top:786.5px;width:14px;height:14px;border-radius:7.0px;background:#95a3bd;color:#fff;font-size:10px;font-weight:700;line-height:14px;text-align:center;letter-spacing:-0.3px">3</div>
<svg style="position:absolute;left:1543px;top:793.5px" width="12" height="7" viewBox="0 0 12 7"><path d="M0,6.8 H12 L6,0.4 Z" fill="#4a90e2"/></svg>
<div class="t" style="left:1236.4px;top:818.80px;font-size:15px;line-height:18px;color:#23262f;font-weight:700;letter-spacing:-0.35px;">Thursday, October 19</div>
<svg style="position:absolute;left:1241.5px;top:850px" width="13" height="13" viewBox="0 0 13 13"><rect x="0.2" y="0.2" width="12.6" height="12.6" rx="2.4" fill="#2aa3e0"/><path d="M8.6,13 V8.2 H10.3 L10.6,6.3 H8.6 V5.2 C8.6,4.6 8.9,4.2 9.6,4.2 H10.7 V2.5 C10.4,2.4 9.8,2.4 9.1,2.4 C7.6,2.4 6.6,3.3 6.6,5 V6.3 H5 V8.2 H6.6 V13 Z" fill="#fff"/></svg>
<div class="t" style="left:1258.2px;top:848.45px;font-size:14px;line-height:17px;color:#2aa3e0;letter-spacing:-0.1px;">#TBT - Throwback Thursdays</div>
<svg style="position:absolute;left:1241.5px;top:879px" width="13" height="13" viewBox="0 0 13 13"><g><rect x="0.3" y="0.3" width="12.4" height="12.4" rx="2.6" fill="#5b2d90"/><g fill="none" stroke="#fff" stroke-width="1.6"><path d="M3,6.3 A3.9,3.9 0 0 1 6.9,10.2"/><path d="M3,3.3 A6.9,6.9 0 0 1 9.9,10.2"/></g><circle cx="3.8" cy="9.4" r="1.1" fill="#fff"/></g></svg>
<div class="t" style="left:1258.2px;top:877.25px;font-size:14px;line-height:17px;color:#5b2d90;letter-spacing:-0.1px;">Test blog</div>
<div style="position:absolute;left:1207px;top:887px;width:377px;height:17px;background:#6f7380"></div>
<div style="position:absolute;left:57px;top:867px;width:226px;height:40px;background:#0b5c99;border-radius:3px 3px 0 0"></div>
<svg style="position:absolute;left:74px;top:873px" width="33" height="24" viewBox="0 0 33 24"><ellipse cx="15.5" cy="11" rx="15" ry="10" fill="#fff"/><path d="M21,17 L31,22.5 L25,14 Z" fill="#fff"/>
<rect x="7.5" y="5.5" width="16" height="11" rx="1" fill="#0b5c99"/><rect x="17" y="3.5" width="5" height="3" fill="#0b5c99"/>
<circle cx="15.5" cy="11" r="3.4" fill="#fff"/><circle cx="15.5" cy="11" r="2" fill="#0b5c99"/></svg>
<div class="t" style="left:113.0px;top:878.65px;font-size:14px;line-height:17px;color:#fff;font-weight:700;letter-spacing:-0.5px;">Feedback / Report a Bug</div>
<svg style="position:absolute;left:1482.3px;top:8.8px" width="31" height="31" viewBox="0 0 50 50"><defs><filter id="blbrody8" x="-10%" y="-10%" width="120%" height="120%"><feGaussianBlur stdDeviation="0.85"/></filter><clipPath id="cpbrody8"><circle cx="25" cy="25" r="25"/></clipPath></defs><defs><linearGradient id="gr" x1="0" x2="1"><stop offset="0" stop-color="#e6e6e6"/><stop offset="1" stop-color="#4a4a4a"/></linearGradient></defs><g clip-path="url(#cpbrody8)"><g filter="url(#blbrody8)"><rect width="50" height="50" fill="#8a4a40"/>
<path d="M0,22 H50 M0,8 H50 M0,36 H50" stroke="#9f7d72" stroke-width="1.3"/>
<path d="M6,22 V50" stroke="#a08a80" stroke-width="2"/>
<path d="M13,20 C12,8 18,2 25,2 C33,2 38,7 37,20 L35,14 C31,11 20,11 15,14 Z" fill="#221b1b"/>
<path d="M14,16 C15,10 22,10 26,10 C32,10 35,12 35,18 C36,28 34,36 25,39 C17,38 14,30 14,16 Z" fill="#dcaa9e"/>
<path d="M21,34 Q25,38 29,34 Q25,40 21,34 Z" fill="#8a6a50"/>
<path d="M4,50 C6,42 13,38 19,37 L25,44 L31,37 C38,38 44,42 46,50 Z" fill="#1b1e2b"/>
<path d="M19,37 L25,44 L31,37 L30,50 H20 Z" fill="#b9c1cf"/></g></g></svg>
</body></html>
